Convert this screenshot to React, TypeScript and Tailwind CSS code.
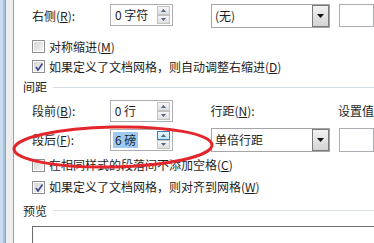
import type { ReactNode } from 'react';

const font = { fontFamily: '"Noto Sans CJK SC", "Noto Sans", sans-serif' };

function Checkbox({ checked }: { checked?: boolean }) {
  return (
    <span className="relative flex h-[13px] w-[13px] shrink-0 items-center justify-center border border-[#8f8f8f] bg-white">
      <span className="h-[9px] w-[9px] bg-gradient-to-br from-[#d6d6d6] to-[#f4f4f4]" />
      {checked && (
        <svg className="absolute left-[1px] top-[1px]" width="10" height="10" viewBox="0 0 10 10">
          <path d="M2 5 L4 8 L8.5 1.5" fill="none" stroke="#3b4a8c" strokeWidth="1.6" />
        </svg>
      )}
    </span>
  );
}

function CheckRow({ checked, children, className }: { checked?: boolean; children: ReactNode; className: string }) {
  return (
    <div className={`flex h-[16px] items-center gap-[4px] pl-[18px] ${className}`}>
      <Checkbox checked={checked} />
      <span className="text-[12px] leading-none text-[#1e1e1e]">{children}</span>
    </div>
  );
}

function SpinBtn({ up, hot }: { up?: boolean; hot?: boolean }) {
  return (
    <span
      className={`flex h-[9px] w-[13px] items-center justify-center border bg-gradient-to-b ${
        hot ? 'border-[#3c7fb1] from-[#eaf6fd] to-[#bee6fd]' : 'border-[#c3c3c3] from-[#f6f6f6] to-[#dedede]'
      }`}
    >
      <svg width="5" height="3" viewBox="0 0 5 3">
        <path d={up ? 'M0 3 L2.5 0 L5 3 Z' : 'M0 0 L2.5 3 L5 0 Z'} fill="#4d6185" />
      </svg>
    </span>
  );
}

function Spinner({ value, selected, hot }: { value: string; selected?: boolean; hot?: boolean }) {
  return (
    <div className="flex h-[22px] w-[63px] shrink-0 items-center justify-between border border-[#abadb3] bg-white pl-[2px] pr-[2px]">
      <span className={`px-[2px] text-[12px] leading-[16px] text-[#1e1e1e] ${selected ? 'bg-[#9ccaf0]' : ''}`}>
        {value}
      </span>
      <span className="flex flex-col">
        <SpinBtn up hot={hot} />
        <SpinBtn />
      </span>
    </div>
  );
}

function Dropdown({ value }: { value: string }) {
  return (
    <div className="flex h-[24px] w-[119px] shrink-0 items-center justify-between border border-[#a5a5a5] bg-white pl-[3px]">
      <span className="text-[12px] leading-none text-[#1e1e1e]">{value}</span>
      <span className="flex h-[22px] w-[17px] items-center justify-center border border-[#7a7a7a] bg-gradient-to-b from-[#f2f2f2] to-[#d4d4d4]">
        <svg width="7" height="4" viewBox="0 0 7 4">
          <path d="M0 0 L7 0 L3.5 4 Z" fill="#111" />
        </svg>
      </span>
    </div>
  );
}

function Section({ title, className }: { title: string; className: string }) {
  return (
    <div className={`flex h-[16px] items-center gap-[6px] pl-[9px] ${className}`}>
      <span className="text-[12px] leading-none text-[#1e1e1e]">{title}</span>
      <span className="h-px flex-1 bg-[#d5dfe5]" />
    </div>
  );
}

export default function App() {
  return (
    <div className="flex h-[243px] w-[374px] overflow-hidden bg-white" style={font}>
      {/* left frame edge */}
      <div className="flex h-full shrink-0">
        <div className="w-[3px] bg-[#c9dbee]" />
        <div className="w-[2px] bg-[#a7c0dc]" />
        <div className="w-px bg-[#8ea4bd]" />
        <div className="w-[7px] bg-[#ededed]" />
        <div className="w-px bg-[#a0a0a0]" />
      </div>

      <div className="relative flex min-w-0 flex-1 flex-col pt-[4px]">
        <div className="flex h-[24px] items-start pl-[18px]">
          <span className="w-[78px] pt-[6px] text-[12px] leading-none text-[#1e1e1e]">右侧(<u>R</u>):</span>
          <Spinner value="0 字符" />
          <span className="w-[38px]" />
          <Dropdown value="(无)" />
          <span className="ml-[9px] h-[23px] flex-1 border border-[#abadb3] bg-white" />
        </div>

        <CheckRow className="mt-[12px]">对称缩进(<u>M</u>)</CheckRow>
        <CheckRow checked className="mt-[6px]">
          如果定义了文档网格，则自动调整右缩进(<u>D</u>)
        </CheckRow>

        <Section title="间距" className="mt-[7px]" />

        <div className="mt-[6px] flex h-[22px] items-center pl-[18px]">
          <span className="w-[78px] text-[12px] leading-none text-[#1e1e1e]">段前(<u>B</u>):</span>
          <Spinner value="0 行" />
          <span className="w-[38px]" />
          <span className="w-[128px] text-[12px] leading-none text-[#1e1e1e]">行距(<u>N</u>):</span>
          <span className="text-[12px] leading-none whitespace-nowrap text-[#1e1e1e]">设置值</span>
        </div>

        <div className="mt-[6px] flex h-[24px] items-center pl-[18px]">
          <span className="w-[78px] text-[12px] leading-none text-[#1e1e1e]">段后(<u>F</u>):</span>
          <Spinner value="6 磅" selected hot />
          <span className="w-[38px]" />
          <Dropdown value="单倍行距" />
          <span className="ml-[9px] h-[24px] flex-1 border border-[#abadb3] bg-white" />
        </div>

        <CheckRow className="mt-[6px]">在相同样式的段落间不添加空格(<u>C</u>)</CheckRow>
        <CheckRow checked className="mt-[8px]">
          如果定义了文档网格，则对齐到网格(<u>W</u>)
        </CheckRow>

        <Section title="预览" className="mt-[10px]" />

        <div className="mt-[8px] ml-[18px] h-[20px] border-t border-l border-[#6d6d6d]" />

        {/* red annotation ellipse */}
        <svg className="pointer-events-none absolute left-[-14px] top-0" width="374" height="243" viewBox="0 0 374 243">
          <ellipse
            cx="113"
            cy="147"
            rx="99"
            ry="20"
            transform="rotate(-1.2 113 147)"
            fill="none"
            stroke="#e3262b"
            strokeWidth="3"
          />
        </svg>
      </div>
    </div>
  );
}
